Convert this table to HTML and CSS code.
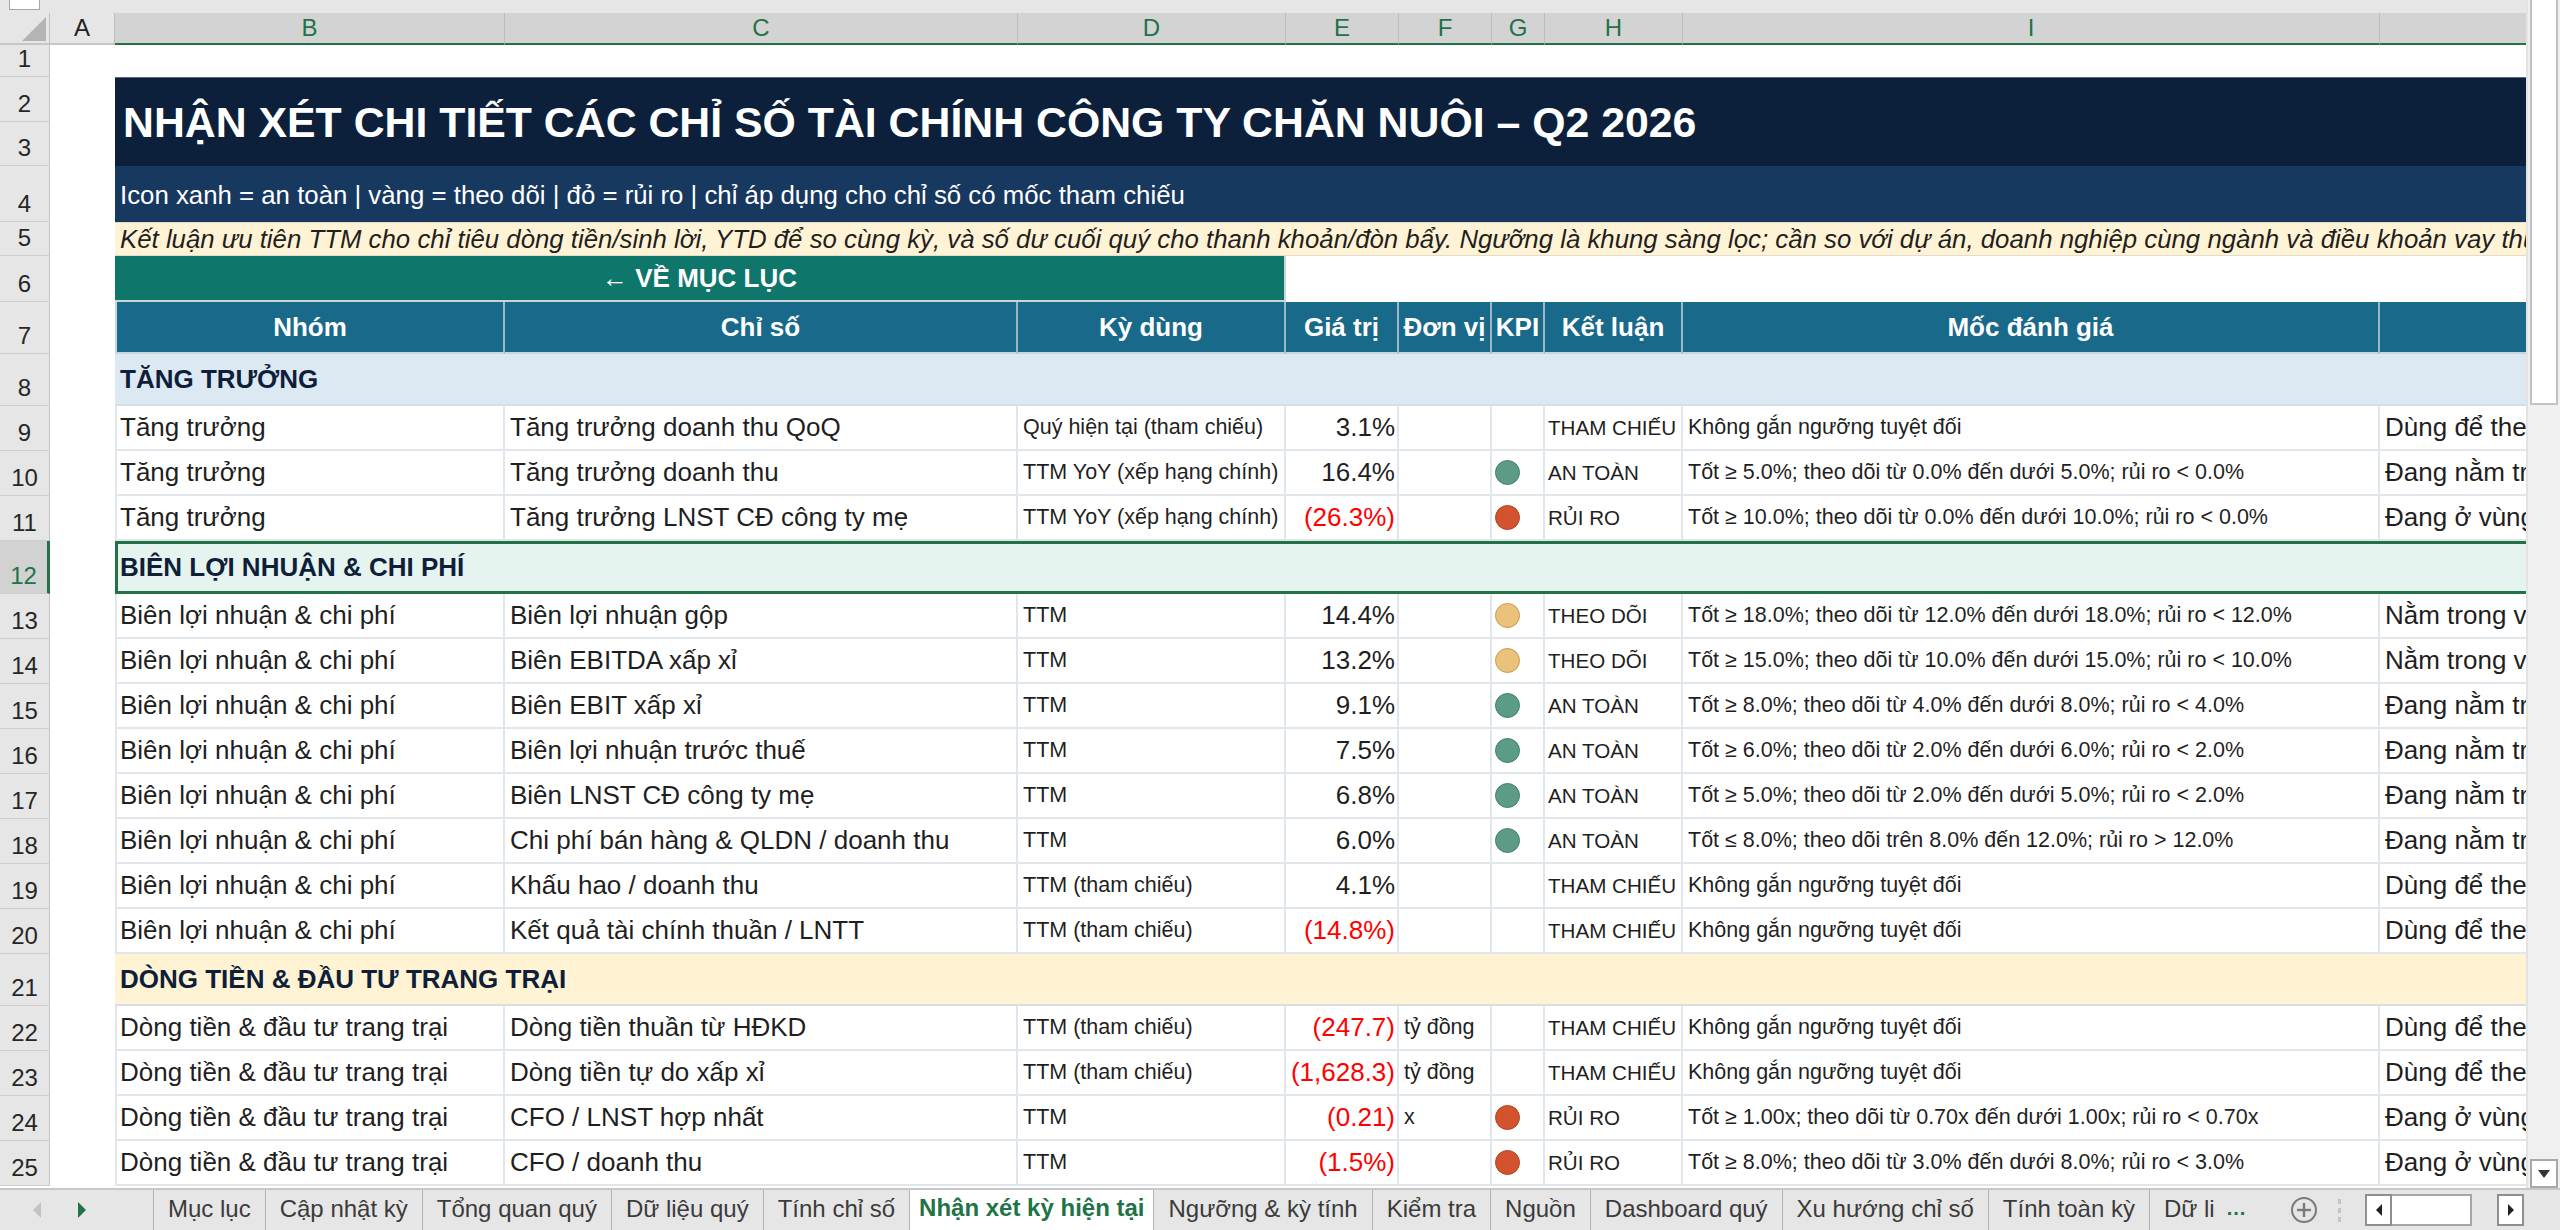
FILE: index.html
```html
<!DOCTYPE html>
<html lang="vi">
<head>
<meta charset="utf-8">
<title>Nhận xét kỳ hiện tại</title>
<link rel="stylesheet" href="styles.css">
</head>
<body>
<div class="app">
  <div class="workspace">
    <div class="sheet">
      <div class="topstrip"><div class="namebox"></div></div>

      <div class="row colhdr">
        <div class="corner"><svg width="26" height="26" viewBox="0 0 26 26"><polygon points="25,1 25,25 1,25" fill="#b4b4b4"/></svg></div>
        <div class="ch plain">A</div>
        <div class="ch">B</div>
        <div class="ch">C</div>
        <div class="ch">D</div>
        <div class="ch">E</div>
        <div class="ch">F</div>
        <div class="ch">G</div>
        <div class="ch">H</div>
        <div class="ch">I</div>
        <div class="ch"></div>
      </div>

      <div class="row r1">
        <div class="rh">1</div>
        <div class="ca"></div>
      </div>

      <div class="row rtitle">
        <div class="rh rh2">2</div>
        <div class="rh rh3">3</div>
        <div class="ca catitle"></div>
        <div class="title">NHẬN XÉT CHI TIẾT CÁC CHỈ SỐ TÀI CHÍNH CÔNG TY CHĂN NUÔI – Q2 2026</div>
      </div>

      <div class="row r4">
        <div class="rh">4</div>
        <div class="ca"></div>
        <div class="subtitle">Icon xanh = an toàn | vàng = theo dõi | đỏ = rủi ro | chỉ áp dụng cho chỉ số có mốc tham chiếu</div>
      </div>

      <div class="row r5">
        <div class="rh">5</div>
        <div class="ca"></div>
        <div class="note">Kết luận ưu tiên TTM cho chỉ tiêu dòng tiền/sinh lời, YTD để so cùng kỳ, và số dư cuối quý cho thanh khoản/đòn bẩy. Ngưỡng là khung sàng lọc; cần so với dự án, doanh nghiệp cùng ngành và điều khoản vay thực tế.</div>
      </div>

      <div class="row r6">
        <div class="rh">6</div>
        <div class="ca"></div>
        <div class="btn">← VỀ MỤC LỤC</div>
      </div>

      <div class="row r7">
        <div class="rh">7</div>
        <div class="ca"></div>
        <div class="hd">Nhóm</div>
        <div class="hd">Chỉ số</div>
        <div class="hd">Kỳ dùng</div>
        <div class="hd">Giá trị</div>
        <div class="hd">Đơn vị</div>
        <div class="hd">KPI</div>
        <div class="hd">Kết luận</div>
        <div class="hd">Mốc đánh giá</div>
        <div class="hd"></div>
      </div>

      <div class="row rsec">
        <div class="rh">8</div>
        <div class="ca"></div>
        <div class="sec sec-blue">TĂNG TRƯỞNG</div>
      </div>

      <div class="row">
        <div class="rh">9</div><div class="ca"></div>
        <div class="c b">Tăng trưởng</div>
        <div class="c">Tăng trưởng doanh thu QoQ</div>
        <div class="c sm">Quý hiện tại (tham chiếu)</div>
        <div class="c num">3.1%</div>
        <div class="c sm"></div>
        <div class="c kpi"></div>
        <div class="c sm h">THAM CHIẾU</div>
        <div class="c sm">Không gắn ngưỡng tuyệt đối</div>
        <div class="c">Dùng để theo dõi xu hướng, không dùng để xếp hạng</div>
      </div>
      <div class="row">
        <div class="rh">10</div><div class="ca"></div>
        <div class="c b">Tăng trưởng</div>
        <div class="c">Tăng trưởng doanh thu</div>
        <div class="c sm">TTM YoY (xếp hạng chính)</div>
        <div class="c num">16.4%</div>
        <div class="c sm"></div>
        <div class="c kpi"><span class="dot green"></span></div>
        <div class="c sm h">AN TOÀN</div>
        <div class="c sm">Tốt ≥ 5.0%; theo dõi từ 0.0% đến dưới 5.0%; rủi ro &lt; 0.0%</div>
        <div class="c">Đang nằm trong vùng an toàn theo ngưỡng</div>
      </div>
      <div class="row">
        <div class="rh">11</div><div class="ca"></div>
        <div class="c b">Tăng trưởng</div>
        <div class="c">Tăng trưởng LNST CĐ công ty mẹ</div>
        <div class="c sm">TTM YoY (xếp hạng chính)</div>
        <div class="c num neg">(26.3%)</div>
        <div class="c sm"></div>
        <div class="c kpi"><span class="dot red"></span></div>
        <div class="c sm h">RỦI RO</div>
        <div class="c sm">Tốt ≥ 10.0%; theo dõi từ 0.0% đến dưới 10.0%; rủi ro &lt; 0.0%</div>
        <div class="c">Đang ở vùng rủi ro, cần xem xét nguyên nhân</div>
      </div>

      <div class="row rsec selrow">
        <div class="rh sel">12</div>
        <div class="ca"></div>
        <div class="sec sec-mint">BIÊN LỢI NHUẬN &amp; CHI PHÍ</div>
      </div>

      <div class="row">
        <div class="rh">13</div><div class="ca"></div>
        <div class="c b">Biên lợi nhuận &amp; chi phí</div>
        <div class="c">Biên lợi nhuận gộp</div>
        <div class="c sm">TTM</div>
        <div class="c num">14.4%</div>
        <div class="c sm"></div>
        <div class="c kpi"><span class="dot yellow"></span></div>
        <div class="c sm h">THEO DÕI</div>
        <div class="c sm">Tốt ≥ 18.0%; theo dõi từ 12.0% đến dưới 18.0%; rủi ro &lt; 12.0%</div>
        <div class="c">Nằm trong vùng theo dõi, cần giám sát thêm</div>
      </div>
      <div class="row">
        <div class="rh">14</div><div class="ca"></div>
        <div class="c b">Biên lợi nhuận &amp; chi phí</div>
        <div class="c">Biên EBITDA xấp xỉ</div>
        <div class="c sm">TTM</div>
        <div class="c num">13.2%</div>
        <div class="c sm"></div>
        <div class="c kpi"><span class="dot yellow"></span></div>
        <div class="c sm h">THEO DÕI</div>
        <div class="c sm">Tốt ≥ 15.0%; theo dõi từ 10.0% đến dưới 15.0%; rủi ro &lt; 10.0%</div>
        <div class="c">Nằm trong vùng theo dõi, cần giám sát thêm</div>
      </div>
      <div class="row">
        <div class="rh">15</div><div class="ca"></div>
        <div class="c b">Biên lợi nhuận &amp; chi phí</div>
        <div class="c">Biên EBIT xấp xỉ</div>
        <div class="c sm">TTM</div>
        <div class="c num">9.1%</div>
        <div class="c sm"></div>
        <div class="c kpi"><span class="dot green"></span></div>
        <div class="c sm h">AN TOÀN</div>
        <div class="c sm">Tốt ≥ 8.0%; theo dõi từ 4.0% đến dưới 8.0%; rủi ro &lt; 4.0%</div>
        <div class="c">Đang nằm trong vùng an toàn theo ngưỡng</div>
      </div>
      <div class="row">
        <div class="rh">16</div><div class="ca"></div>
        <div class="c b">Biên lợi nhuận &amp; chi phí</div>
        <div class="c">Biên lợi nhuận trước thuế</div>
        <div class="c sm">TTM</div>
        <div class="c num">7.5%</div>
        <div class="c sm"></div>
        <div class="c kpi"><span class="dot green"></span></div>
        <div class="c sm h">AN TOÀN</div>
        <div class="c sm">Tốt ≥ 6.0%; theo dõi từ 2.0% đến dưới 6.0%; rủi ro &lt; 2.0%</div>
        <div class="c">Đang nằm trong vùng an toàn theo ngưỡng</div>
      </div>
      <div class="row">
        <div class="rh">17</div><div class="ca"></div>
        <div class="c b">Biên lợi nhuận &amp; chi phí</div>
        <div class="c">Biên LNST CĐ công ty mẹ</div>
        <div class="c sm">TTM</div>
        <div class="c num">6.8%</div>
        <div class="c sm"></div>
        <div class="c kpi"><span class="dot green"></span></div>
        <div class="c sm h">AN TOÀN</div>
        <div class="c sm">Tốt ≥ 5.0%; theo dõi từ 2.0% đến dưới 5.0%; rủi ro &lt; 2.0%</div>
        <div class="c">Đang nằm trong vùng an toàn theo ngưỡng</div>
      </div>
      <div class="row">
        <div class="rh">18</div><div class="ca"></div>
        <div class="c b">Biên lợi nhuận &amp; chi phí</div>
        <div class="c">Chi phí bán hàng &amp; QLDN / doanh thu</div>
        <div class="c sm">TTM</div>
        <div class="c num">6.0%</div>
        <div class="c sm"></div>
        <div class="c kpi"><span class="dot green"></span></div>
        <div class="c sm h">AN TOÀN</div>
        <div class="c sm">Tốt ≤ 8.0%; theo dõi trên 8.0% đến 12.0%; rủi ro &gt; 12.0%</div>
        <div class="c">Đang nằm trong vùng an toàn theo ngưỡng</div>
      </div>
      <div class="row">
        <div class="rh">19</div><div class="ca"></div>
        <div class="c b">Biên lợi nhuận &amp; chi phí</div>
        <div class="c">Khấu hao / doanh thu</div>
        <div class="c sm">TTM (tham chiếu)</div>
        <div class="c num">4.1%</div>
        <div class="c sm"></div>
        <div class="c kpi"></div>
        <div class="c sm h">THAM CHIẾU</div>
        <div class="c sm">Không gắn ngưỡng tuyệt đối</div>
        <div class="c">Dùng để theo dõi xu hướng, không dùng để xếp hạng</div>
      </div>
      <div class="row">
        <div class="rh">20</div><div class="ca"></div>
        <div class="c b">Biên lợi nhuận &amp; chi phí</div>
        <div class="c">Kết quả tài chính thuần / LNTT</div>
        <div class="c sm">TTM (tham chiếu)</div>
        <div class="c num neg">(14.8%)</div>
        <div class="c sm"></div>
        <div class="c kpi"></div>
        <div class="c sm h">THAM CHIẾU</div>
        <div class="c sm">Không gắn ngưỡng tuyệt đối</div>
        <div class="c">Dùng để theo dõi xu hướng, không dùng để xếp hạng</div>
      </div>

      <div class="row rsec">
        <div class="rh">21</div>
        <div class="ca"></div>
        <div class="sec sec-cream">DÒNG TIỀN &amp; ĐẦU TƯ TRANG TRẠI</div>
      </div>

      <div class="row">
        <div class="rh">22</div><div class="ca"></div>
        <div class="c b">Dòng tiền &amp; đầu tư trang trại</div>
        <div class="c">Dòng tiền thuần từ HĐKD</div>
        <div class="c sm">TTM (tham chiếu)</div>
        <div class="c num neg">(247.7)</div>
        <div class="c sm">tỷ đồng</div>
        <div class="c kpi"></div>
        <div class="c sm h">THAM CHIẾU</div>
        <div class="c sm">Không gắn ngưỡng tuyệt đối</div>
        <div class="c">Dùng để theo dõi xu hướng, không dùng để xếp hạng</div>
      </div>
      <div class="row">
        <div class="rh">23</div><div class="ca"></div>
        <div class="c b">Dòng tiền &amp; đầu tư trang trại</div>
        <div class="c">Dòng tiền tự do xấp xỉ</div>
        <div class="c sm">TTM (tham chiếu)</div>
        <div class="c num neg">(1,628.3)</div>
        <div class="c sm">tỷ đồng</div>
        <div class="c kpi"></div>
        <div class="c sm h">THAM CHIẾU</div>
        <div class="c sm">Không gắn ngưỡng tuyệt đối</div>
        <div class="c">Dùng để theo dõi xu hướng, không dùng để xếp hạng</div>
      </div>
      <div class="row">
        <div class="rh">24</div><div class="ca"></div>
        <div class="c b">Dòng tiền &amp; đầu tư trang trại</div>
        <div class="c">CFO / LNST hợp nhất</div>
        <div class="c sm">TTM</div>
        <div class="c num neg">(0.21)</div>
        <div class="c sm">x</div>
        <div class="c kpi"><span class="dot red"></span></div>
        <div class="c sm h">RỦI RO</div>
        <div class="c sm">Tốt ≥ 1.00x; theo dõi từ 0.70x đến dưới 1.00x; rủi ro &lt; 0.70x</div>
        <div class="c">Đang ở vùng rủi ro, cần xem xét nguyên nhân</div>
      </div>
      <div class="row">
        <div class="rh">25</div><div class="ca"></div>
        <div class="c b">Dòng tiền &amp; đầu tư trang trại</div>
        <div class="c">CFO / doanh thu</div>
        <div class="c sm">TTM</div>
        <div class="c num neg">(1.5%)</div>
        <div class="c sm"></div>
        <div class="c kpi"><span class="dot red"></span></div>
        <div class="c sm h">RỦI RO</div>
        <div class="c sm">Tốt ≥ 8.0%; theo dõi từ 3.0% đến dưới 8.0%; rủi ro &lt; 3.0%</div>
        <div class="c">Đang ở vùng rủi ro, cần xem xét nguyên nhân</div>
      </div>
    </div>

    <div class="vscroll">
      <div class="vthumb"></div>
      <div class="vspace"></div>
      <div class="vdown"><svg width="14" height="10" viewBox="0 0 14 10"><polygon points="1,1 13,1 7,9" fill="#333"/></svg></div>
    </div>
  </div>

  <div class="tabbar">
    <div class="tabnav">
      <svg class="navl" width="10" height="18" viewBox="0 0 10 18"><polygon points="9,1 9,17 1,9" fill="#c3c3c3"/></svg>
      <svg class="navr" width="10" height="18" viewBox="0 0 10 18"><polygon points="1,1 1,17 9,9" fill="#217346"/></svg>
    </div>
    <div class="tabs">
      <div class="tab first">Mục lục</div>
      <div class="tab">Cập nhật kỳ</div>
      <div class="tab">Tổng quan quý</div>
      <div class="tab">Dữ liệu quý</div>
      <div class="tab">Tính chỉ số</div>
      <div class="tab active">Nhận xét kỳ hiện tại</div>
      <div class="tab">Ngưỡng &amp; kỳ tính</div>
      <div class="tab">Kiểm tra</div>
      <div class="tab">Nguồn</div>
      <div class="tab">Dashboard quý</div>
      <div class="tab">Xu hướng chỉ số</div>
      <div class="tab">Tính toàn kỳ</div>
      <div class="tab last">Dữ li<span class="more">...</span></div>
    </div>
    <div class="tools">
      <svg class="addsheet" width="28" height="28" viewBox="0 0 28 28"><circle cx="14" cy="14" r="12" fill="none" stroke="#7a7a7a" stroke-width="2"/><line x1="14" y1="7" x2="14" y2="21" stroke="#7a7a7a" stroke-width="2.4"/><line x1="7" y1="14" x2="21" y2="14" stroke="#7a7a7a" stroke-width="2.4"/></svg>
      <div class="vdots"><span></span><span></span><span></span></div>
      <div class="hscroll">
        <div class="hbtn"><svg width="8" height="14" viewBox="0 0 8 14"><polygon points="7,1 7,13 1,7" fill="#222"/></svg></div>
        <div class="hthumb"></div>
        <div class="htrack"></div>
        <div class="hbtn"><svg width="8" height="14" viewBox="0 0 8 14"><polygon points="1,1 1,13 7,7" fill="#222"/></svg></div>
      </div>
    </div>
  </div>
</div>
</body>
</html>
```

FILE: styles.css
```css
* { box-sizing: border-box; }

html, body {
  margin: 0;
  padding: 0;
  width: 2560px;
  height: 1230px;
  overflow: hidden;
  background: #ffffff;
  font-family: "Liberation Sans", Arial, sans-serif;
  color: #1f1f1f;
}

.app {
  display: flex;
  flex-direction: column;
  width: 2560px;
  height: 1230px;
}

.workspace {
  display: flex;
  height: 1188px;
  flex: none;
}

.sheet {
  width: 2526px;
  height: 1188px;
  overflow: hidden;
  display: flex;
  flex-direction: column;
  flex: none;
}

.topstrip {
  height: 13px;
  flex: none;
  background: #e6e6e6;
}

.namebox {
  margin-left: 9px;
  width: 31px;
  height: 10px;
  background: #ffffff;
  border: 1px solid #a6a6a6;
  border-top: none;
}

/* ---------- generic sheet row ---------- */
.row {
  display: grid;
  grid-template-columns: 50px 65px 390px 513px 268px 113px 93px 53px 138px 697px 600px;
  height: 45px;
  flex: none;
}

.rh {
  grid-column: 1;
  background: #e6e6e6;
  border-bottom: 1px solid #cdcdcd;
  border-right: 1px solid #c4c4c4;
  display: flex;
  align-items: flex-end;
  justify-content: center;
  padding-bottom: 3px;
  font-size: 24px;
  color: #262626;
}

.rh.sel {
  background: #d2d2d2;
  color: #217346;
  border-right: 3px solid #217346;
}

.ca {
  grid-column: 2;
  background: #ffffff;
}

/* ---------- column headers ---------- */
.colhdr {
  height: 32px;
}

.corner {
  background: #e6e6e6;
  border-right: 1px solid #c4c4c4;
  border-bottom: 2px solid #c6c6c6;
  display: flex;
  align-items: flex-end;
  justify-content: flex-end;
  padding: 0 2px 1px 0;
}

.ch {
  background: #d3d3d3;
  color: #217346;
  font-size: 24px;
  display: flex;
  align-items: center;
  justify-content: center;
  border-right: 1px solid #bdbdbd;
  border-bottom: 2px solid #217346;
}

.ch.plain {
  background: #e6e6e6;
  color: #222222;
  border-bottom: 2px solid #c6c6c6;
}

/* ---------- header block ---------- */
.r1 { height: 32px; }

.rtitle {
  height: 89px;
  grid-template-rows: 45px 44px;
}

.rh2 { grid-row: 1; }
.rh3 { grid-row: 2; }
.catitle { grid-row: 1 / 3; }

.title {
  grid-column: 3 / -1;
  grid-row: 1 / 3;
  background: #0c1f3b;
  color: #ffffff;
  font-weight: bold;
  font-size: 42.8px;
  display: flex;
  align-items: center;
  padding-left: 8px;
  white-space: nowrap;
  border-top: 1px solid #5a6675;
}

.r4 { height: 56px; }

.subtitle {
  grid-column: 3 / -1;
  background: #17385f;
  color: #ffffff;
  font-size: 25.8px;
  display: flex;
  align-items: flex-end;
  padding: 0 0 12px 5px;
  white-space: nowrap;
}

.r5 { height: 34px; }

.note {
  grid-column: 3 / -1;
  background: #fff3d6;
  color: #1f1f1f;
  font-style: italic;
  font-size: 25.8px;
  display: flex;
  align-items: center;
  padding-left: 5px;
  white-space: nowrap;
  overflow: hidden;
  border-top: 1px solid #e2dccb;
  border-bottom: 1px solid #e2dccb;
}

.r6 { height: 46px; }

.btn {
  grid-column: 3 / 6;
  background: #0f766b;
  color: #ffffff;
  font-weight: bold;
  font-size: 26px;
  display: flex;
  align-items: center;
  justify-content: center;
  border-right: 2px solid #c9d6d3;
  border-bottom: 2px solid #c9d6d3;
}

.r7 { height: 52px; }

.hd {
  background: #18698a;
  color: #ffffff;
  font-weight: bold;
  font-size: 26px;
  display: flex;
  align-items: center;
  justify-content: center;
  white-space: nowrap;
  border-right: 2px solid #9db6c4;
  border-bottom: 2px solid #c9d6de;
}

.hd:nth-child(3) { border-left: 2px solid #c9d6de; }

/* ---------- section rows ---------- */
.rsec { height: 52px; }
.selrow { height: 53px; }

.sec {
  grid-column: 3 / -1;
  font-weight: bold;
  font-size: 26px;
  color: #0f1f3a;
  display: flex;
  align-items: center;
  padding-left: 5px;
  white-space: nowrap;
  border-bottom: 2px solid #d6dee7;
}

.sec-blue { background: #dce9f3; }
.sec-mint { background: #e6f4ef; }
.sec-cream { background: #fff3d4; }

.selrow .sec {
  box-shadow: inset 0 0 0 3px #217346;
  border-bottom: none;
}

/* ---------- data cells ---------- */
.c {
  display: flex;
  align-items: center;
  padding: 0 5px;
  font-size: 26px;
  white-space: nowrap;
  overflow: hidden;
  border-right: 2px solid #e1e6ed;
  border-bottom: 2px solid #e1e6ed;
  color: #1f1f1f;
}

.c.b {
  border-left: 2px solid #e1e6ed;
  padding-left: 3px;
}

.c.sm { font-size: 21.5px; }

.c.h {
  font-size: 20.6px;
  padding: 0 0 0 3px;
}

.c.num {
  justify-content: flex-end;
  padding-right: 2px;
  font-size: 26px;
}

.neg { color: #ff0000; }

.c.kpi { padding-left: 3px; }

.dot {
  width: 25px;
  height: 25px;
  border-radius: 50%;
  display: block;
}

.dot.green { background: #5c9c86; border: 1.5px solid #427f6a; }
.dot.yellow { background: #eac27c; border: 1.5px solid #c79b45; }
.dot.red { background: #d4532f; border: 1.5px solid #b14022; }

/* ---------- vertical scrollbar ---------- */
.vscroll {
  width: 34px;
  height: 1188px;
  flex: none;
  background: #f0f0f0;
  display: flex;
  flex-direction: column;
  padding: 0 2px 0 2px;
  border-left: 2px solid #e3e3e3;
}

.vthumb {
  height: 405px;
  background: #ffffff;
  border: 2px solid #c2c2c2;
  border-top: none;
  flex: none;
}

.vspace { flex: 1; }

.vdown {
  height: 29px;
  flex: none;
  background: #ffffff;
  border: 2px solid #a8a8a8;
  display: flex;
  align-items: center;
  justify-content: center;
}

/* ---------- sheet tabs ---------- */
.tabbar {
  height: 42px;
  flex: none;
  background: #e6e6e6;
  border-top: 2px solid #c8c8c8;
  display: flex;
  align-items: stretch;
}

.tabnav {
  width: 153px;
  flex: none;
  display: flex;
  align-items: center;
  padding-left: 32px;
  gap: 35px;
}

.tabs {
  flex: 1;
  display: flex;
  overflow: hidden;
  align-items: stretch;
}

.tab {
  flex: none;
  display: flex;
  align-items: center;
  padding: 0 14px 2px;
  font-size: 24px;
  color: #3b3b3b;
  border-right: 1px solid #b3b3b3;
  white-space: nowrap;
}

.tab.first { border-left: 1px solid #b3b3b3; }

.tab.active {
  background: #ffffff;
  color: #217346;
  font-weight: bold;
  padding: 0 9px 2px;
  margin-top: -2px;
}

.tab.last {
  border-right: none;
  padding-right: 0;
}

.more {
  color: #217346;
  font-weight: bold;
  font-size: 20px;
  margin-left: 12px;
  letter-spacing: 1px;
  align-self: flex-end;
  padding-bottom: 8px;
}

.tools {
  flex: none;
  display: flex;
  align-items: center;
  padding-right: 36px;
}

.addsheet { margin-right: 20px; }

.vdots {
  display: flex;
  flex-direction: column;
  gap: 4px;
  margin-right: 24px;
}

.vdots span {
  width: 3px;
  height: 5px;
  background: #c4c4c4;
  display: block;
}

.hscroll {
  display: flex;
  align-items: stretch;
  height: 32px;
  width: 159px;
}

.hbtn {
  width: 27px;
  flex: none;
  background: #ffffff;
  border: 2px solid #8f8f8f;
  display: flex;
  align-items: center;
  justify-content: center;
}

.hthumb {
  width: 80px;
  flex: none;
  background: #ffffff;
  border: 2px solid #a6a6a6;
  border-left: none;
}

.htrack {
  flex: 1;
  background: #e6e6e6;
}
```
